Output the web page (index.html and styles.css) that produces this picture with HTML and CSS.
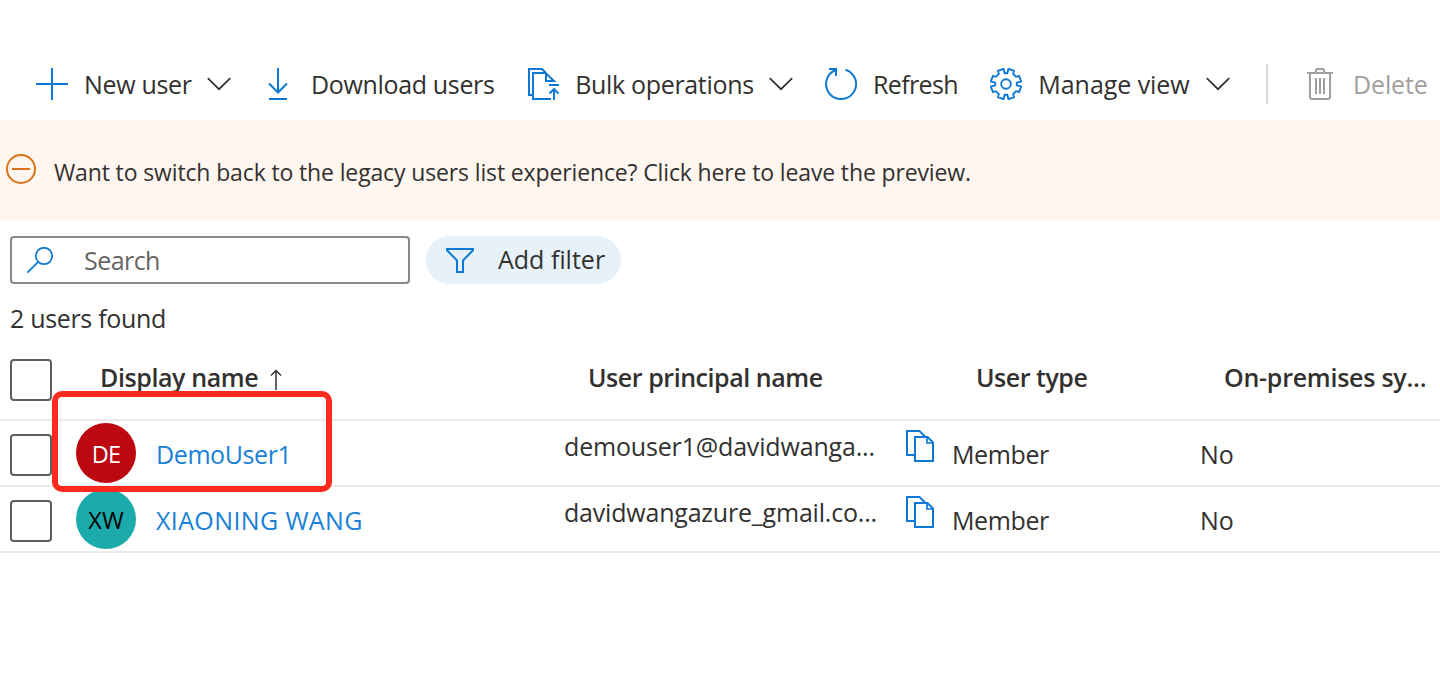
FILE: index.html
```html
<!DOCTYPE html>
<html lang="en">
<head>
<meta charset="utf-8">
<title>Users</title>
<link rel="stylesheet" href="styles.css">
</head>
<body>
<svg class="defs" width="0" height="0">
  <symbol id="chevron" viewBox="0 0 24 14"><path d="M.8 1.200 12 12.200 23.200 1.200" fill="none" stroke="#323130" stroke-width="1.700"/></symbol>
  <symbol id="copy" viewBox="0 0 28 32"><g fill="none" stroke="#0f78d4" stroke-width="2"><path d="M8 25H1V1h12.500l6 6"/><path d="M9 7h12.500l5.500 5.500V31H9z"/><path d="M21 7v6h6" stroke-width="1.700"/></g></symbol>
</svg>
<main class="page">
  <nav class="toolbar">
    <button class="cmd cmd-new"><svg width="32" height="32"><path d="M16 0v32M0 16h32" stroke="#0f78d4" stroke-width="2"/></svg><span class="t t-new">New user</span><svg width="24" height="14"><use href="#chevron"/></svg></button>
    <button class="cmd cmd-download"><svg width="20" height="32"><path d="M10 0v25M1 15.500l9 9 9-9M1 31h18" fill="none" stroke="#0f78d4" stroke-width="2"/></svg><span class="t t-download">Download users</span></button>
    <button class="cmd cmd-bulk"><svg width="32" height="32"><g fill="none" stroke="#0f78d4" stroke-width="2"><path d="M5 27H1V1h13l4 4M23 31H5V5h12.500l8.500 8h-8V5M21 17h10M26 32V21.500M21.500 25.500 26 21l4.500 4.500"/></g></svg><span class="t t-bulk">Bulk operations</span><svg width="24" height="14"><use href="#chevron"/></svg></button>
    <button class="cmd cmd-refresh"><svg width="32" height="32"><path d="M20.500 1.700A15 15 0 1 1 10.800 2M4 1h7v7" fill="none" stroke="#0f78d4" stroke-width="2"/></svg><span class="t t-refresh">Refresh</span></button>
    <button class="cmd cmd-view"><svg width="32" height="32" viewBox="-16 -16 32 32"><path d="M-1.300-10.800h2.600L2.500-15.200 8-13.100 7.200-10 10-7.200 13.100-8 15.200-2.500 10.800-1.300v2.600L15.200 2.500 13.100 8 10 7.200 7.200 10 8 13.100 2.500 15.200 1.300 10.800h-2.600L-2.500 15.200-8 13.100-7.200 10-10 7.200-13.100 8-15.200 2.500-10.800 1.300v-2.600L-15.200-2.500-13.100-8-10-7.200-7.200-10-8-13.100-2.500-15.200z" fill="none" stroke="#0f78d4" stroke-width="1.900"/><circle r="4.800" fill="none" stroke="#0f78d4" stroke-width="1.900"/></svg><span class="t t-view">Manage view</span><svg width="24" height="14"><use href="#chevron"/></svg></button>
    <span class="divider"></span>
    <button class="cmd cmd-delete" disabled><svg width="26" height="32"><path d="M0 5h26M9 5V2.500Q9 1 10.500 1h5Q17 1 17 2.500V5M3 5v24q0 2 2 2h16q2 0 2-2V5M9 10v16M13 10v16M17 10v16" fill="none" stroke="#a19f9d" stroke-width="2"/></svg><span class="t t-delete">Delete</span></button>
  </nav>
  <section class="banner">
    <svg width="30" height="30"><circle cx="15" cy="15" r="14" fill="none" stroke="#db7319" stroke-width="2"/><path d="M6 15h18" stroke="#db7319" stroke-width="2"/></svg>
    <span class="t t-banner">Want to switch back to the legacy users list experience? Click here to leave the preview.</span>
  </section>
  <section class="filters">
    <div class="search"><svg width="27" height="27"><g fill="none" stroke="#0f78d4" stroke-width="1.800"><circle cx="17" cy="9" r="8.200"/><path d="M11.200 14.800.4 25.600"/></g></svg><span class="t t-search">Search</span></div>
    <button class="pill"><svg width="28" height="25"><path d="M1 1h26v1.300L17 12.500V24h-6V12.500L1 2.300z" fill="none" stroke="#0f78d4" stroke-width="2"/></svg><span class="t t-filter">Add filter</span></button>
  </section>
  <p class="count"><span class="t t-count">2 users found</span></p>
  <section class="grid">
    <div class="row head">
      <i class="box"></i>
      <b><span class="t t-hname">Display name</span><svg class="sort" width="12" height="22"><path d="M6 21V1.500M1 6.500l5-5 5 5" fill="none" stroke="#323130" stroke-width="1.500"/></svg></b>
      <b><span class="t t-hupn">User principal name</span></b>
      <b><span class="t t-htype">User type</span></b>
      <b><span class="t t-hsync">On-premises sy...</span></b>
    </div>
    <div class="row">
      <i class="box"></i>
      <div class="name"><span class="avatar red"><span class="t t-de">DE</span></span><a class="t t-demo">DemoUser1</a></div>
      <div class="upn"><span class="t t-upn1">demouser1@davidwanga...</span><svg width="28" height="32"><use href="#copy"/></svg></div>
      <div class="cell"><span class="t t-member">Member</span></div>
      <div class="cell"><span class="t">No</span></div>
    </div>
    <div class="row">
      <i class="box"></i>
      <div class="name"><span class="avatar teal"><span class="t">XW</span></span><a class="t t-xiao">XIAONING WANG</a></div>
      <div class="upn"><span class="t t-upn2">davidwangazure_gmail.co...</span><svg width="28" height="32"><use href="#copy"/></svg></div>
      <div class="cell"><span class="t t-member">Member</span></div>
      <div class="cell"><span class="t">No</span></div>
    </div>
    <span class="marker"></span>
  </section>
</main>
</body>
</html>
```
FILE: styles.css
```css
* { box-sizing: border-box; }
body { margin: 0; background: #fff; color: #323130; font-family: "Open Sans", "Noto Sans", sans-serif; font-size: 25px; line-height: 34px; }
svg { display: block; flex: none; }
.defs { position: absolute; }
button { border: 0; padding: 0; background: none; font: inherit; color: inherit; }
.page { width: 1440px; height: 678px; overflow: hidden; }
.t { white-space: nowrap; display: block; flex: none; }
.toolbar { height: 120px; padding: 48px 0 0 36px; display: flex; align-items: center; }
.cmd { display: flex; align-items: center; flex: none; height: 40px; }
.cmd-new { width: 232px; gap: 16px; }
.cmd-download { width: 260px; gap: 23px; }
.cmd-bulk { width: 297px; gap: 15px; }
.cmd-refresh { width: 165px; gap: 16px; }
.cmd-view { width: 276px; gap: 16px; }
.cmd-delete { gap: 20px; color: #a19f9d; }
.t-new { width: 107px; letter-spacing: -0.32px; }
.t-download { letter-spacing: -0.34px; }
.t-bulk { width: 179px; letter-spacing: -0.33px; }
.t-refresh { letter-spacing: -0.65px; }
.t-view { width: 152px; letter-spacing: -0.06px; }
.t-delete { letter-spacing: -0.15px; }
.divider { width: 2px; height: 40px; margin-right: 39px; background: #d8d8d8; }
.banner { height: 100px; background: #fff6f0; display: flex; align-items: flex-start; padding: 34px 0 0 6px; gap: 18px; }
.t-banner { font-size: 23px; letter-spacing: -0.135px; padding-top: 1px; }
.filters { display: flex; padding: 16px 0 0 10px; gap: 16px; }
.search { width: 400px; height: 48px; border: 2px solid #8a8886; border-radius: 4px; display: flex; align-items: center; padding-left: 15px; gap: 30px; color: #666563; }
.t-search { letter-spacing: -0.55px; }
.pill { width: 195px; height: 48px; border-radius: 24px; background: #e7f1fa; display: flex; align-items: center; padding-left: 20px; gap: 24px; }
.pill .t { padding-bottom: 2px; }
.count { margin: 17px 0 0 10px; height: 39px; }
.t-count { letter-spacing: -0.32px; }
.grid { position: relative; }
.row { display: grid; grid-template-columns: 66px 488px 388px 248px 1fr; height: 66px; padding-left: 10px; border-bottom: 2px solid #eaeaea; }
.head { height: 81px; }
.head b { font-weight: 600; padding: 20px 0 0 24px; display: flex; align-items: flex-start; }
.box { width: 42px; height: 42px; border: 2px solid #605e5c; border-radius: 4px; margin-top: 13px; }
.head .box { margin-top: 19px; }
.sort { margin: 9px 0 0 12px; }
.t-hname { width: 158px; letter-spacing: -0.4px; }
.t-hupn { letter-spacing: -0.45px; }
.t-htype { letter-spacing: -0.48px; }
.t-hsync { letter-spacing: -0.25px; }
.name { display: flex; align-items: flex-start; }
.avatar { width: 60px; height: 60px; border-radius: 50%; margin: 2px 20px 0 0; padding-top: 2px; display: flex; align-items: center; justify-content: center; font-size: 23.5px; }
.red { background: #bd0811; color: #fff; }
.teal { background: #1babaa; color: #000; }
.t-de { letter-spacing: -0.7px; }
a.t { color: #1a7fd6; padding-top: 16px; }
.t-demo { letter-spacing: -0.4px; }
.t-xiao { letter-spacing: 0.38px; }
.upn { display: flex; padding-top: 9px; }
.upn .t { width: 342px; margin-top: -1px; }
.t-upn1 { letter-spacing: -0.17px; }
.t-upn2 { letter-spacing: -0.2px; }
.cell { padding-top: 16px; }
.t-member { letter-spacing: -0.38px; }
.marker { position: absolute; left: 52px; top: 51px; width: 280px; height: 101px; border: 6px solid #ff2a1f; border-radius: 10px; }
```
